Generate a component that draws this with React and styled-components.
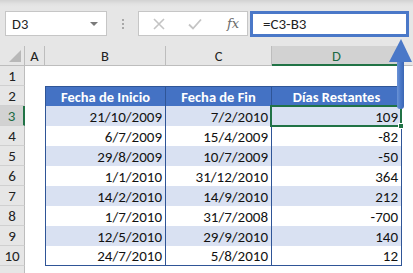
import React from "react";
import styled, { createGlobalStyle } from "styled-components";

const Global = createGlobalStyle`
  html, body { margin: 0; padding: 0; background: #ffffff; }
  body { font-family: "Carlito", "Lato", "Liberation Sans", sans-serif; }
  * { box-sizing: border-box; }
`;

const Frame = styled.div`
  position: relative;
  width: 413px;
  height: 273px;
  overflow: hidden;
  background: #ffffff;
`;

const Toolbar = styled.div`
  height: 46px;
  display: flex;
  align-items: flex-start;
  padding: 11px 0 0 5px;
  background: linear-gradient(#d2d2d2 0px, #e2e2e2 4px, #e6e6e6 7px, #e6e6e6 100%);
`;

const NameBox = styled.div`
  width: 102px;
  height: 25px;
  background: #fff;
  border: 1px solid #c6c6c6;
  display: flex;
  align-items: center;
  justify-content: space-between;
  padding: 0 8px 0 6px;
  font-size: 14.5px;
  color: #222;
`;

const Caret = styled.span`
  width: 0;
  height: 0;
  border-left: 4px solid transparent;
  border-right: 4px solid transparent;
  border-top: 4px solid #7a7a7a;
`;

const Dots = styled.div`
  width: 31px;
  height: 25px;
  display: flex;
  flex-direction: column;
  align-items: center;
  justify-content: center;
  gap: 2px;
  span {
    width: 2px;
    height: 2px;
    background: #a8a8a8;
  }
`;

const Buttons = styled.div`
  width: 110px;
  height: 25px;
  background: #fff;
  border: 1px solid #c6c6c6;
  display: flex;
  align-items: center;
  padding-left: 14px;
  gap: 23px;
`;

const FxLabel = styled.span`
  font-family: "DejaVu Serif", "Liberation Serif", serif;
  font-style: italic;
  font-size: 13px;
  color: #6a6a6a;
  margin-left: 2px;
`;

const Formula = styled.div`
  margin-left: 2px;
  width: 159px;
  height: 26px;
  background: #fff;
  border: 3px solid #4a78c8;
  display: flex;
  align-items: center;
  padding-left: 10px;
  font-size: 15px;
  color: #222;
`;

const Sheet = styled.div`
  position: relative;
  display: grid;
  grid-template-columns: 25px 20px 121px 106px 130px 1fr;
  grid-auto-rows: 20px;
  background: #fff;
`;

const Corner = styled.div`
  background: #e6e6e6;
  border-right: 1px solid #bdbdbd;
  border-bottom: 1px solid #bdbdbd;
  position: relative;
  &::after {
    content: "";
    position: absolute;
    right: 3px;
    bottom: 3px;
    width: 0;
    height: 0;
    border-left: 12px solid transparent;
    border-bottom: 12px solid #b8b8b8;
  }
`;

const ColHead = styled.div`
  background: ${(p) => (p.$sel ? "#d2d2d2" : "#e6e6e6")};
  border-right: 1px solid ${(p) => (p.$last ? "transparent" : "#bdbdbd")};
  border-bottom: ${(p) => (p.$sel ? "2px solid #217346" : "1px solid #bdbdbd")};
  display: flex;
  align-items: center;
  justify-content: center;
  font-size: 14.5px;
  color: ${(p) => (p.$sel ? "#1d6a43" : "#222")};
  padding-top: 1px;
`;

const RowHead = styled.div`
  background: ${(p) => (p.$sel ? "#d2d2d2" : "#e6e6e6")};
  border-right: ${(p) => (p.$sel ? "2px solid #217346" : "1px solid #bdbdbd")};
  border-bottom: 1px solid #d0d0d0;
  display: flex;
  align-items: center;
  justify-content: center;
  font-size: 15px;
  color: ${(p) => (p.$sel ? "#1d6a43" : "#222")};
  padding-top: 1px;
`;

const BLUE = "#2f5597";

const Cell = styled.div`
  display: flex;
  align-items: center;
  justify-content: ${(p) => (p.$head ? "center" : "flex-end")};
  padding: 1px 3px 0 3px;
  font-size: ${(p) => (p.$head ? "14.5px" : "15px")};
  white-space: nowrap;
  color: ${(p) => (p.$head ? "#ffffff" : "#111")};
  font-weight: ${(p) => (p.$head ? 700 : 400)};
  background: ${(p) =>
    p.$kind === "head" ? "#4472c4" : p.$kind === "band" ? "#d9e1f2" : "#ffffff"};
  border-left: ${(p) => (p.$first ? `1px solid ${BLUE}` : "none")};
  border-right: ${(p) => (p.$kind ? `1px solid ${BLUE}` : "none")};
  border-top: ${(p) => (p.$top ? `1px solid ${BLUE}` : "none")};
  border-bottom: ${(p) => (p.$bottom ? `1px solid ${BLUE}` : "none")};
`;

const Selection = styled.div`
  position: absolute;
  left: 270px;
  top: 59px;
  width: 132px;
  height: 22px;
  border: 2px solid #217346;
  pointer-events: none;
`;

const Handle = styled.div`
  position: absolute;
  right: -4px;
  bottom: -4px;
  width: 6px;
  height: 6px;
  background: #217346;
  border: 1px solid #fff;
`;

const Arrow = styled.svg`
  position: absolute;
  left: 385px;
  top: 36px;
`;

const rows = [
  ["21/10/2009", "7/2/2010", "109"],
  ["6/7/2009", "15/4/2009", "-82"],
  ["29/8/2009", "10/7/2009", "-50"],
  ["1/1/2010", "31/12/2010", "364"],
  ["14/2/2010", "14/9/2010", "212"],
  ["1/7/2010", "31/7/2008", "-700"],
  ["12/5/2010", "29/9/2010", "140"],
  ["24/7/2010", "5/8/2010", "12"],
];

const heads = ["Fecha de Inicio", "Fecha de Fin", "Días Restantes"];

export default function App() {
  const sheetRows = [];
  for (let r = 1; r <= 11; r++) {
    const cells = [];
    cells.push(
      <RowHead key="h" $sel={r === 3}>
        {r <= 10 ? r : ""}
      </RowHead>
    );
    cells.push(<Cell key="a" />);
    for (let c = 0; c < 3; c++) {
      if (r === 2) {
        cells.push(
          <Cell key={c} $kind="head" $head $top $first={c === 0}>
            {heads[c]}
          </Cell>
        );
      } else if (r >= 3 && r <= 10) {
        cells.push(
          <Cell
            key={c}
            $kind={r % 2 === 1 ? "band" : "plain"}
            $first={c === 0}
            $bottom={r === 10}
          >
            {rows[r - 3][c]}
          </Cell>
        );
      } else {
        cells.push(<Cell key={c} />);
      }
    }
    cells.push(<Cell key="f" />);
    sheetRows.push(<React.Fragment key={r}>{cells}</React.Fragment>);
  }

  return (
    <Frame>
      <Global />
      <Toolbar>
        <NameBox>
          <span>D3</span>
          <Caret />
        </NameBox>
        <Dots>
          <span />
          <span />
          <span />
        </Dots>
        <Buttons>
          <svg width="12" height="12" viewBox="0 0 12 12">
            <path d="M1 1 L11 11 M11 1 L1 11" stroke="#c4c4c4" strokeWidth="1.6" />
          </svg>
          <svg width="14" height="12" viewBox="0 0 14 12">
            <path d="M1 6.5 L5 10.5 L13 1.5" stroke="#c4c4c4" strokeWidth="1.8" fill="none" />
          </svg>
          <FxLabel>fx</FxLabel>
        </Buttons>
        <Formula>=C3-B3</Formula>
      </Toolbar>
      <Sheet>
        <Corner />
        <ColHead>A</ColHead>
        <ColHead>B</ColHead>
        <ColHead>C</ColHead>
        <ColHead $sel>D</ColHead>
        <ColHead $last />
        {sheetRows}
        <Selection>
          <Handle />
        </Selection>
      </Sheet>
      <Arrow width="28" height="76" viewBox="0 0 28 76">
        <defs>
          <linearGradient id="shaft" x1="0" x2="1" y1="0" y2="0">
            <stop offset="0" stopColor="#6b93d6" />
            <stop offset="0.5" stopColor="#4a78c8" />
            <stop offset="1" stopColor="#3a66b4" />
          </linearGradient>
        </defs>
        <rect x="12" y="22" width="7" height="51" rx="3" fill="url(#shaft)" />
        <path d="M16 3 L27 26 L4 26 Z" fill="#4a78c8" />
      </Arrow>
    </Frame>
  );
}
